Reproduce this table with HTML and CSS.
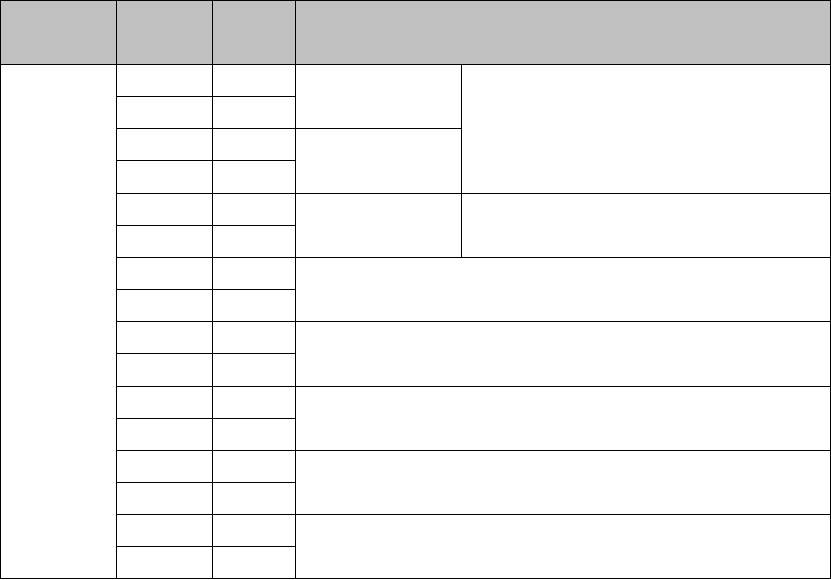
FILE: index.html
```html
<!DOCTYPE html>
<html lang="en">
<head>
<meta charset="utf-8">
<title>Table</title>
<link rel="stylesheet" href="styles.css">
</head>
<body>
<table class="grid">
  <colgroup>
    <col class="c-a">
    <col class="c-b">
    <col class="c-c">
    <col class="c-d">
    <col class="c-e">
  </colgroup>
  <thead>
    <tr class="r-head">
      <th></th>
      <th></th>
      <th></th>
      <th colspan="2"></th>
    </tr>
  </thead>
  <tbody>
    <tr class="r"><td rowspan="16"></td><td></td><td></td><td rowspan="2"></td><td rowspan="4"></td></tr>
    <tr class="r"><td></td><td></td></tr>
    <tr class="r"><td></td><td></td><td rowspan="2"></td></tr>
    <tr class="r r-tall"><td></td><td></td></tr>
    <tr class="r"><td></td><td></td><td rowspan="2"></td><td rowspan="2"></td></tr>
    <tr class="r"><td></td><td></td></tr>
    <tr class="r"><td></td><td></td><td rowspan="2" colspan="2"></td></tr>
    <tr class="r"><td></td><td></td></tr>
    <tr class="r"><td></td><td></td><td rowspan="2" colspan="2"></td></tr>
    <tr class="r r-tall"><td></td><td></td></tr>
    <tr class="r"><td></td><td></td><td rowspan="2" colspan="2"></td></tr>
    <tr class="r"><td></td><td></td></tr>
    <tr class="r"><td></td><td></td><td rowspan="2" colspan="2"></td></tr>
    <tr class="r"><td></td><td></td></tr>
    <tr class="r"><td></td><td></td><td rowspan="2" colspan="2"></td></tr>
    <tr class="r"><td></td><td></td></tr>
  </tbody>
</table>
</body>
</html>
```

FILE: styles.css
```css
html, body {
  margin: 0;
  padding: 0;
  background: #ffffff;
}

body {
  font-family: "Liberation Serif", "Times New Roman", serif;
}

.grid {
  border-collapse: collapse;
  table-layout: fixed;
  width: 830px;
}

.grid th,
.grid td {
  border: 1px solid #000000;
  padding: 0;
}

.grid th {
  background: #c0c0c0;
}

.c-a { width: 116px; }
.c-b { width: 96px; }
.c-c { width: 83px; }
.c-d { width: 166px; }
.c-e { width: 369px; }

.r-head { height: 64px; }
.r { height: 32px; }
.r-tall { height: 33px; }
```
